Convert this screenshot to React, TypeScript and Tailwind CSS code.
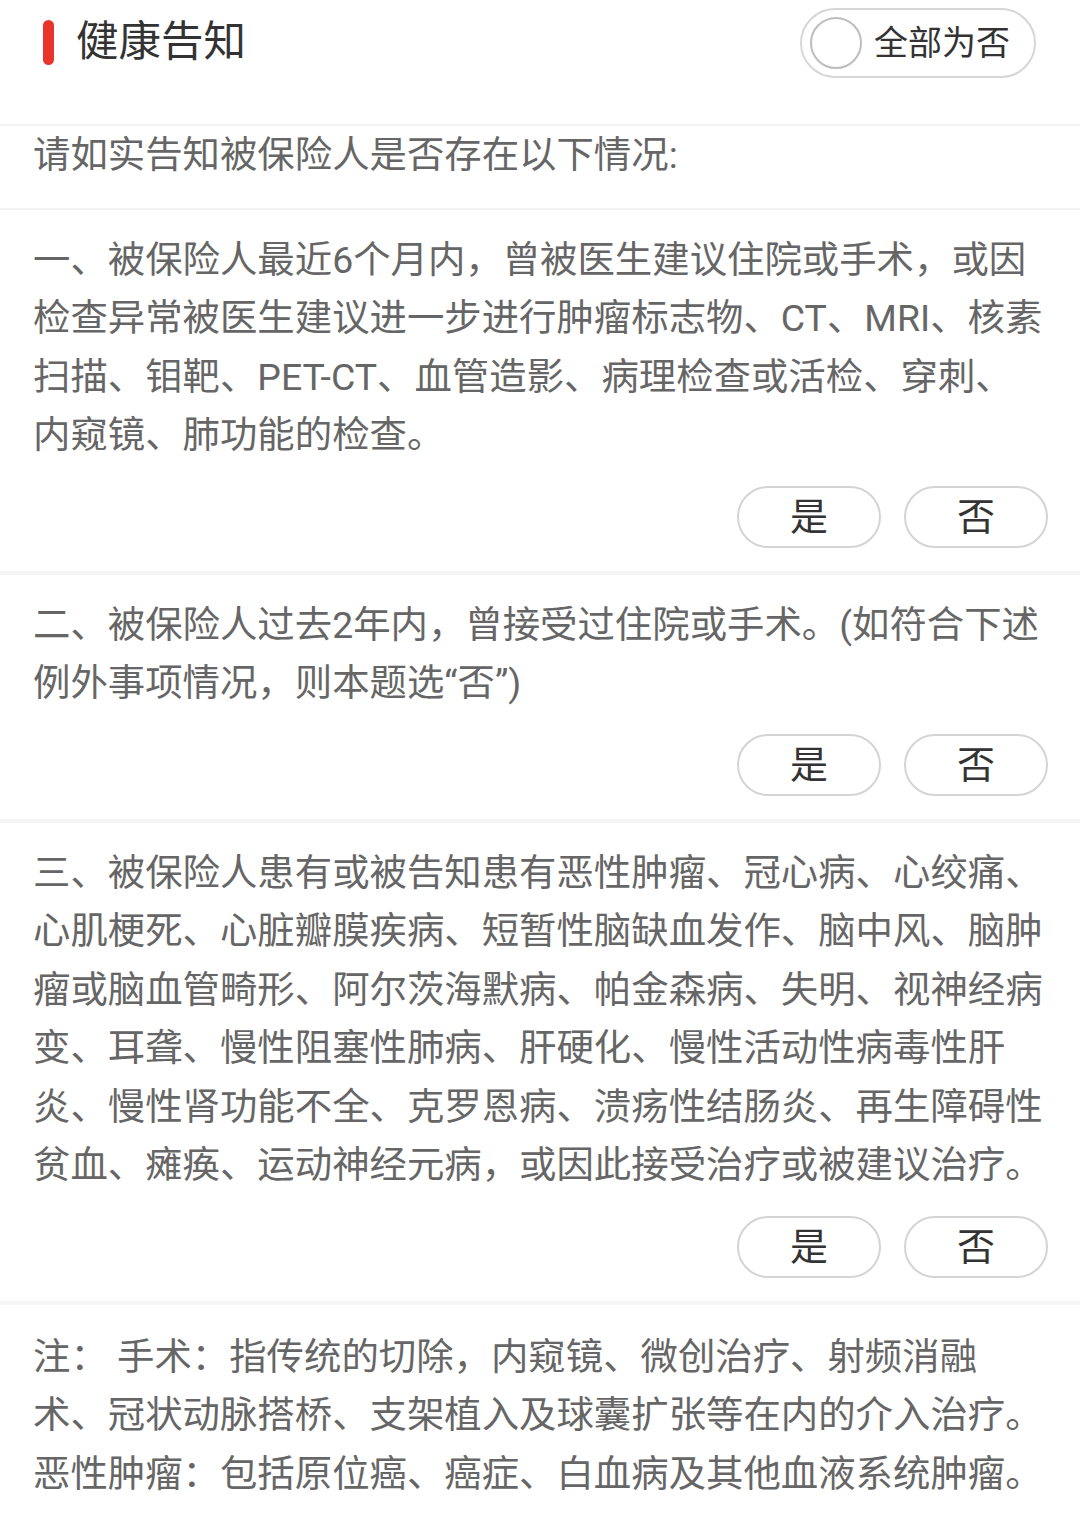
import { useState } from 'react'

const FONT = { fontFamily: 'Roboto, "Noto Sans CJK SC", "Noto Sans", sans-serif' }

type Answer = 'yes' | 'no' | null

// line breaks follow the reference layout exactly
const QUESTIONS: string[][] = [
  [
    '一、被保险人最近6个月内，曾被医生建议住院或手术，或因',
    '检查异常被医生建议进一步进行肿瘤标志物、CT、MRI、核素',
    '扫描、钼靶、PET-CT、血管造影、病理检查或活检、穿刺、',
    '内窥镜、肺功能的检查。',
  ],
  [
    '二、被保险人过去2年内，曾接受过住院或手术。(如符合下述',
    '例外事项情况，则本题选“否”)',
  ],
  [
    '三、被保险人患有或被告知患有恶性肿瘤、冠心病、心绞痛、',
    '心肌梗死、心脏瓣膜疾病、短暂性脑缺血发作、脑中风、脑肿',
    '瘤或脑血管畸形、阿尔茨海默病、帕金森病、失明、视神经病',
    '变、耳聋、慢性阻塞性肺病、肝硬化、慢性活动性病毒性肝',
    '炎、慢性肾功能不全、克罗恩病、溃疡性结肠炎、再生障碍性',
    '贫血、瘫痪、运动神经元病，或因此接受治疗或被建议治疗。',
  ],
]

const NOTE = [
  '注： 手术：指传统的切除，内窥镜、微创治疗、射频消融',
  '术、冠状动脉搭桥、支架植入及球囊扩张等在内的介入治疗。',
  '恶性肿瘤：包括原位癌、癌症、白血病及其他血液系统肿瘤。',
]

function Lines({ lines }: { lines: string[] }) {
  return (
    <div className="text-[37.4px] leading-[58.5px] text-[#666]">
      {lines.map((l) => (
        <p key={l} className="whitespace-nowrap">
          {l}
        </p>
      ))}
    </div>
  )
}

function ChoiceButton({ label, active, onClick }: { label: string; active: boolean; onClick: () => void }) {
  return (
    <button
      onClick={onClick}
      className={`flex h-[62px] w-[144px] items-center justify-center rounded-full border-2 text-[38px] leading-none ${
        active ? 'border-[#e8342a] text-[#e8342a]' : 'border-[#d4d4d4] text-[#333]'
      }`}
    >
      {label}
    </button>
  )
}

export default function App() {
  const [answers, setAnswers] = useState<Answer[]>(QUESTIONS.map(() => null))
  const allNo = answers.every((a) => a === 'no')

  const setAnswer = (i: number, a: Answer) =>
    setAnswers((prev) => prev.map((v, idx) => (idx === i ? a : v)))

  return (
    <div className="min-h-[1520px] w-[1080px] bg-white" style={FONT}>
      {/* Header */}
      <div className="flex h-[124px] items-start justify-between pl-[43px] pr-[44px] pt-[8px]">
        <div className="flex h-[68px] items-center gap-[22px]">
          <span className="h-[45px] w-[11px] rounded-full bg-[#e8342a]" />
          <span className="text-[42.5px] leading-none text-[#333]">健康告知</span>
        </div>
        <button
          onClick={() => setAnswers(QUESTIONS.map(() => (allNo ? null : 'no')))}
          className="flex h-[70px] w-[236px] items-center gap-[12px] rounded-full border-2 border-[#d6d6d6] pl-[8px]"
        >
          <span
            className={`h-[52px] w-[52px] rounded-full border-2 ${
              allNo ? 'border-[#e8342a] bg-[#e8342a]' : 'border-[#bdbdbd] bg-white'
            }`}
          />
          <span className="text-[34px] leading-none text-[#333]">全部为否</span>
        </button>
      </div>
      <div className="h-[2px] bg-[#f2f2f2]" />

      {/* Intro */}
      <div className="pb-[23px] pl-[33px]">
        <Lines lines={['请如实告知被保险人是否存在以下情况:']} />
      </div>
      <div className="h-[2px] bg-[#f2f2f2]" />

      {/* Questions */}
      {QUESTIONS.map((q, i) => (
        <div key={i}>
          <div className="pb-[23px] pl-[33px] pr-[32px] pt-[21px]">
            <Lines lines={q} />
            <div className="mt-[21px] flex justify-end gap-[23px]">
              <ChoiceButton label="是" active={answers[i] === 'yes'} onClick={() => setAnswer(i, 'yes')} />
              <ChoiceButton label="否" active={answers[i] === 'no'} onClick={() => setAnswer(i, 'no')} />
            </div>
          </div>
          <div className="h-[4px] bg-[#f5f5f5]" />
        </div>
      ))}

      {/* Note */}
      <div className="pl-[33px] pt-[23px]">
        <Lines lines={NOTE} />
      </div>
    </div>
  )
}
